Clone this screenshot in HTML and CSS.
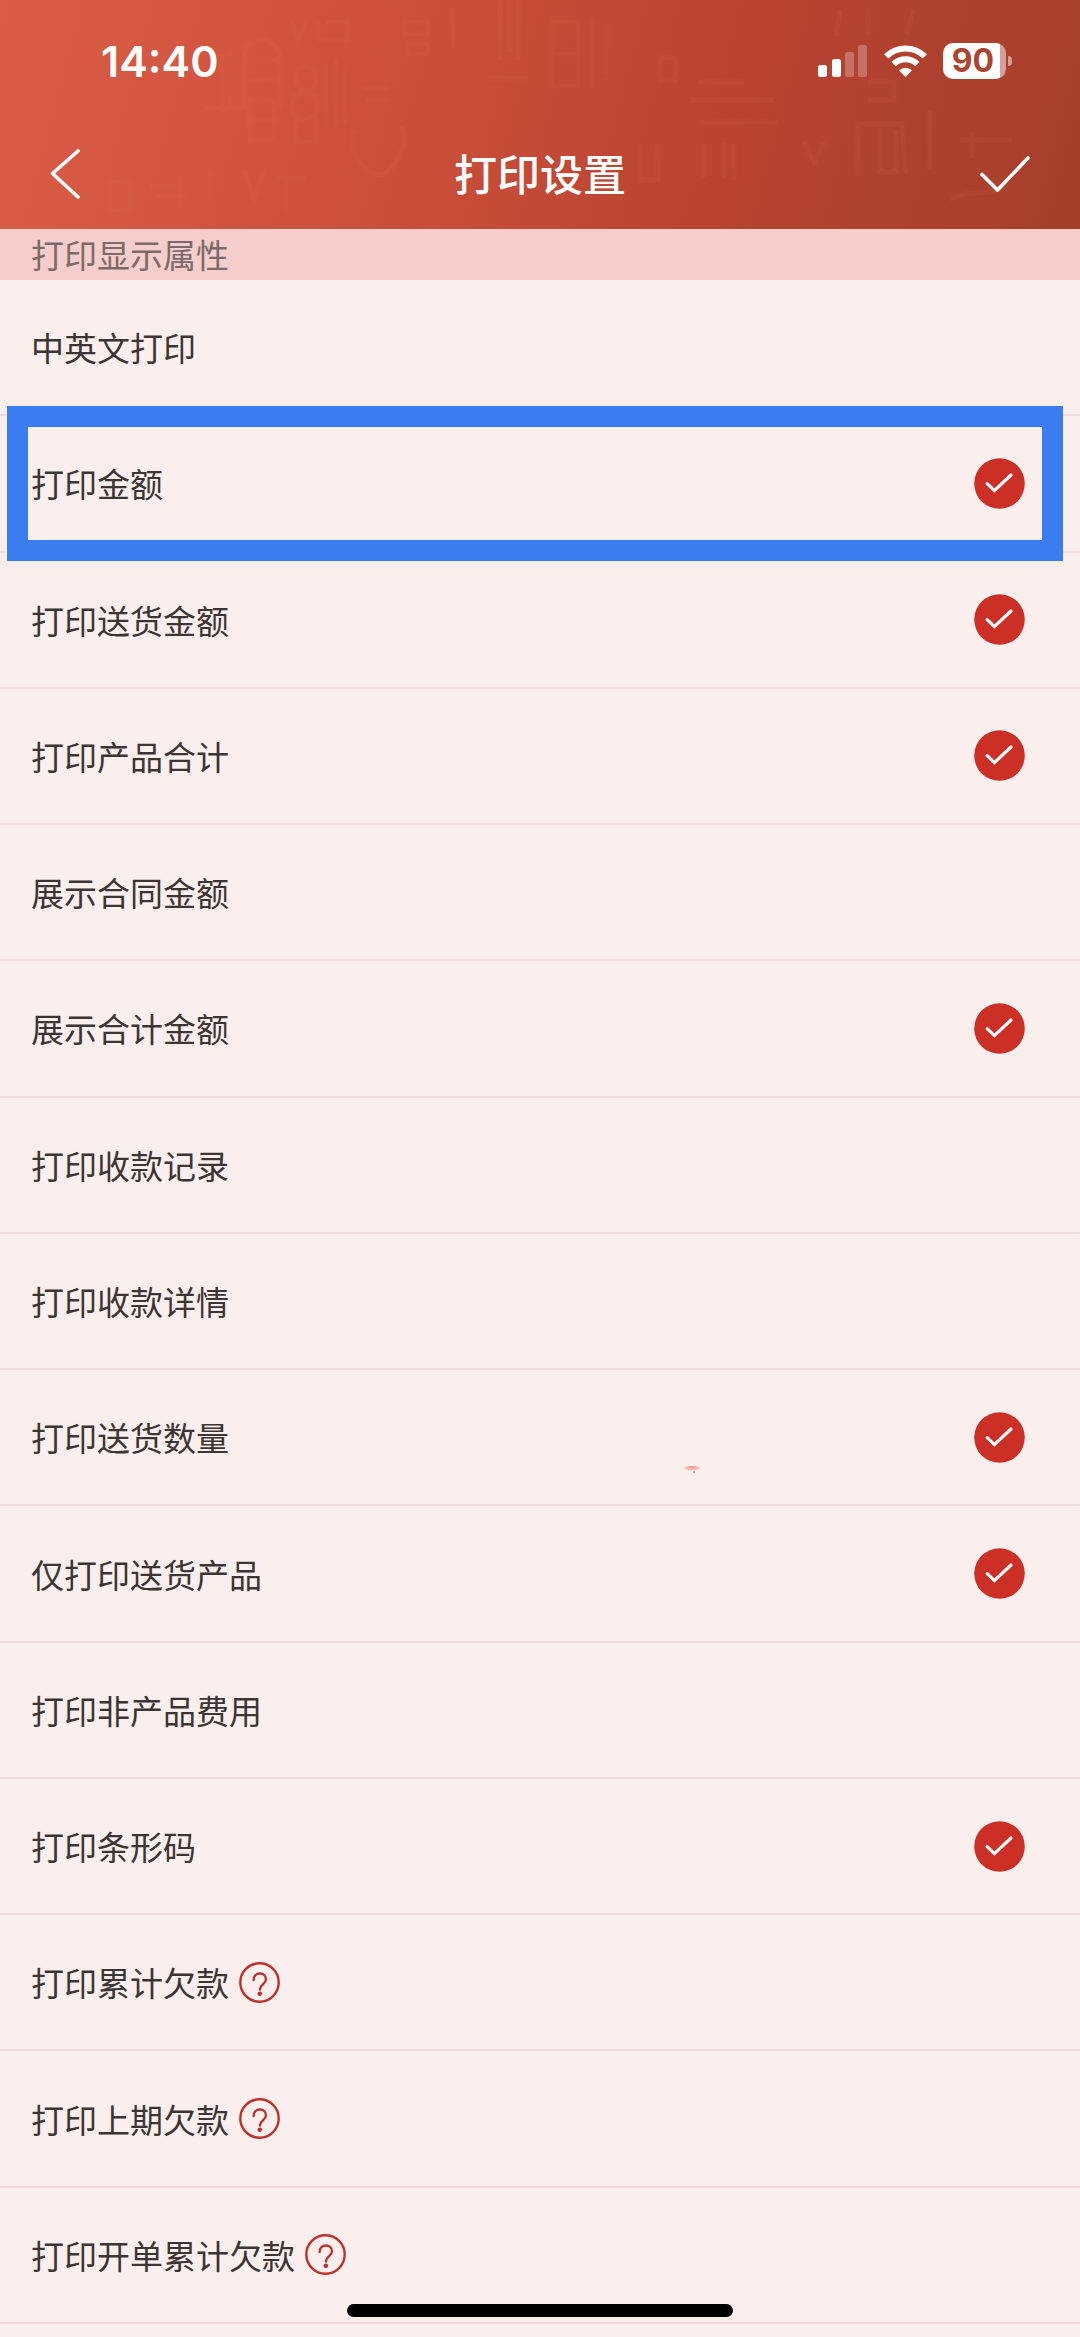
FILE: index.html
```html
<!DOCTYPE html>
<html lang="zh-CN">
<head>
  <meta charset="UTF-8" />
  <meta name="viewport" content="width=device-width, initial-scale=1" />
  <title>打印设置</title>
  <link rel="stylesheet" href="styles.css">
</head>
<body>
  <!-- 图标 -->
  <svg class="icon-defs" width="0" height="0" aria-hidden="true">
    <symbol id="icon-tick" viewBox="0 0 51 51">
      <circle cx="25.5" cy="25.5" r="25.3" fill="#cb2f26" />
      <path d="M13.2 25.6 20.4 32.6 37 17" fill="none" stroke="#fff" stroke-width="3.2" stroke-linecap="round" />
    </symbol>
    <symbol id="icon-help" viewBox="0 0 41 41">
      <circle cx="20.5" cy="20.5" r="19.2" fill="none" stroke="#bd322d" stroke-width="2.4" />
      <path d="M14.600 18c0-4 2.500-6.500 6.200-6.500s6.200 2.300 6.200 5.800c0 4.800-6 5.200-6 9.700v.5" fill="none" stroke="#bd322d" stroke-width="2.4" stroke-linecap="round" />
      <circle cx="20.800" cy="31.800" r="2.300" fill="#bd322d" />
    </symbol>
  </svg>

  <header class="header">
    <svg class="header-pattern" viewBox="0 0 1080 229" preserveAspectRatio="xMidYMid slice" fill="none" stroke="#e87a61" stroke-width="5" aria-hidden="true">
      <path d="M244 110V62c0-30 36-30 36 0v48M244 60h36M248 80h28M250 100h24v40h-24zM246 120h34M205 108h36M222 54v58M230 50v60M296 78c0-16 20-16 20 0s-20 16-20 0zM292 106c0-18 26-18 26 0s-26 18-26 0zM296 118v24h20v-24M326 64v64M336 60v68M344 70v56" />
      <path d="M292 20l6 22 8-20M318 22v18h30V22h-22M354 130c-8 30 20 50 30 44s26-30 18-48M362 88h28M366 100h22M404 22h24v12h-24zM408 44h20v10h-20zM452 8l2 40M500 0v60M510 0v52M518 0v60M488 78h40" />
      <path d="M110 182h20v28h-20zM150 186h30M156 196h30M180 176v34M210 174v26M244 170l10 28 10-28M276 178h30M286 176v36" />
      <path d="M552 22h26v64h-26zM552 54h26M592 18v70M606 24v50M660 58h16v22h-16zM698 82h46M690 100h84M700 122h78M640 144v36h18v-36M704 144v34M724 142v36M734 144v36" />
      <path d="M804 142l10 20 10-20M858 176v-52h44l4 50M880 128v44h16v-42M868 82h26v18h-26M930 110v60M960 140h52M972 132v26M950 200c14-12 40-2 56-14M840 10l-4 26M868 8v26M914 10l-8 24" />
    </svg>

    <div class="status-bar">
      <span class="time">14:40</span>
      <div class="status-icons">
        <svg width="50" height="34" viewBox="0 0 50 34" fill="#fff" aria-hidden="true">
          <rect x="0" y="21" width="9" height="12" rx="2.500" />
          <rect x="14" y="15" width="9" height="18" rx="2.500" />
          <rect x="27" y="8" width="9" height="25" rx="2.500" opacity=".25" />
          <rect x="40" y="1" width="9" height="32" rx="2.500" opacity=".25" />
        </svg>
        <svg width="43" height="34" viewBox="0 0 43 34" fill="none" stroke="#fff" stroke-width="6" aria-hidden="true">
          <path d="M2.200 12.400a27.500 27.500 0 0 1 38.600 0" />
          <path d="M9.600 20a17 17 0 0 1 23.800 0" />
          <path d="M21.500 33 15 26.300a9.300 9.300 0 0 1 13 0z" fill="#fff" stroke="none" />
        </svg>
        <div class="battery"><span>90</span></div>
      </div>
    </div>

    <nav class="nav-bar">
      <button type="button" class="nav-button" aria-label="返回">
        <svg width="30" height="50" viewBox="0 0 30 50" fill="none" stroke="#fff" stroke-width="3.600" stroke-linecap="round" stroke-linejoin="round"><path d="M28 2 2.500 24.500 28 48" /></svg>
      </button>
      <h1>打印设置</h1>
      <button type="button" class="nav-button" aria-label="保存">
        <svg width="50" height="36" viewBox="0 0 50 36" fill="none" stroke="#fff" stroke-width="3.600" stroke-linecap="round" stroke-linejoin="round"><path d="M2 18.500 17.500 34 48 2" /></svg>
      </button>
    </nav>
  </header>

  <main class="settings">
    <h2>打印显示属性</h2>
    <ul class="setting-list">
      <li class="row">
        <label for="bilingual">中英文打印</label>
        <span class="check"><input type="checkbox" id="bilingual" /><svg><use href="#icon-tick" /></svg></span>
      </li>
      <li class="row highlighted">
        <label for="amount">打印金额</label>
        <span class="check"><input type="checkbox" id="amount" checked /><svg><use href="#icon-tick" /></svg></span>
      </li>
      <li class="row">
        <label for="delivery-amount">打印送货金额</label>
        <span class="check"><input type="checkbox" id="delivery-amount" checked /><svg><use href="#icon-tick" /></svg></span>
      </li>
      <li class="row">
        <label for="product-total">打印产品合计</label>
        <span class="check"><input type="checkbox" id="product-total" checked /><svg><use href="#icon-tick" /></svg></span>
      </li>
      <li class="row">
        <label for="contract-amount">展示合同金额</label>
        <span class="check"><input type="checkbox" id="contract-amount" /><svg><use href="#icon-tick" /></svg></span>
      </li>
      <li class="row">
        <label for="total-amount">展示合计金额</label>
        <span class="check"><input type="checkbox" id="total-amount" checked /><svg><use href="#icon-tick" /></svg></span>
      </li>
      <li class="row">
        <label for="payment-record">打印收款记录</label>
        <span class="check"><input type="checkbox" id="payment-record" /><svg><use href="#icon-tick" /></svg></span>
      </li>
      <li class="row">
        <label for="payment-detail">打印收款详情</label>
        <span class="check"><input type="checkbox" id="payment-detail" /><svg><use href="#icon-tick" /></svg></span>
      </li>
      <li class="row">
        <label for="delivery-count">打印送货数量</label>
        <svg class="speck" width="16" height="10" viewBox="0 0 16 10" aria-hidden="true"><path d="M0 4 4 2h8l4 2-4 2H4z" fill="#f7b5a9" /><path d="M5 3h6M9 8h2" stroke="#f3a095" stroke-width="2" /></svg>
        <span class="check"><input type="checkbox" id="delivery-count" checked /><svg><use href="#icon-tick" /></svg></span>
      </li>
      <li class="row">
        <label for="delivery-only">仅打印送货产品</label>
        <span class="check"><input type="checkbox" id="delivery-only" checked /><svg><use href="#icon-tick" /></svg></span>
      </li>
      <li class="row">
        <label for="other-fee">打印非产品费用</label>
        <span class="check"><input type="checkbox" id="other-fee" /><svg><use href="#icon-tick" /></svg></span>
      </li>
      <li class="row">
        <label for="barcode">打印条形码</label>
        <span class="check"><input type="checkbox" id="barcode" checked /><svg><use href="#icon-tick" /></svg></span>
      </li>
      <li class="row">
        <label for="total-debt">打印累计欠款</label>
        <button type="button" class="help" aria-label="累计欠款说明"><svg><use href="#icon-help" /></svg></button>
        <span class="check"><input type="checkbox" id="total-debt" /><svg><use href="#icon-tick" /></svg></span>
      </li>
      <li class="row">
        <label for="last-debt">打印上期欠款</label>
        <button type="button" class="help" aria-label="上期欠款说明"><svg><use href="#icon-help" /></svg></button>
        <span class="check"><input type="checkbox" id="last-debt" /><svg><use href="#icon-tick" /></svg></span>
      </li>
      <li class="row">
        <label for="order-debt">打印开单累计欠款</label>
        <button type="button" class="help" aria-label="开单累计欠款说明"><svg><use href="#icon-help" /></svg></button>
        <span class="check"><input type="checkbox" id="order-debt" /><svg><use href="#icon-tick" /></svg></span>
      </li>
    </ul>
  </main>

  <div class="home-indicator"></div>
</body>
</html>
```
FILE: styles.css
```css
* {
  box-sizing: border-box;
}
body {
  margin: 0;
  min-height: 100vh;
  display: flex;
  flex-direction: column;
  background-color: #fbefed;
  color: #3b3534;
  font-family: "Noto Sans CJK SC", sans-serif;
  font-size: 33px;
}
button {
  padding: 0;
  border: none;
  background: none;
  cursor: pointer;
}
svg {
  display: block;
}
.icon-defs {
  position: absolute;
}

/* 顶部 */
.header {
  position: relative;
  background: linear-gradient(105deg, #da5d47 0%, #c94e39 42%, #b94431 66%, #a63e2c 100%);
  color: #fff;
}
.header-pattern {
  position: absolute;
  inset: 0;
  width: 100%;
  height: 100%;
  opacity: 0.09;
}
.status-bar,
.nav-bar {
  position: relative;
  display: flex;
  align-items: center;
  justify-content: space-between;
}
.status-bar {
  height: 122px;
  padding: 0 74px 0 101px;
}
.time {
  font-family: Inter, sans-serif;
  font-size: 43px;
  font-weight: 600;
}
.status-icons {
  display: flex;
  align-items: center;
  gap: 16px;
}
.battery {
  position: relative;
  width: 63px;
  height: 36px;
  padding-right: 3px;
  border-radius: 10px;
  background: linear-gradient(to right, #fff 57px, rgba(255, 255, 255, 0.5) 57px);
  color: #ad4431;
  font-family: Inter, sans-serif;
  font-size: 32px;
  font-weight: 700;
  line-height: 36px;
  text-align: center;
}
.battery::after {
  content: "";
  position: absolute;
  top: 13px;
  right: -6px;
  width: 4px;
  height: 10px;
  border-radius: 0 4px 4px 0;
  background-color: rgba(255, 255, 255, 0.5);
}
.nav-bar {
  height: 107px;
  padding: 0 50px 4px;
}
.nav-button {
  display: flex;
  width: 50px;
}
.nav-bar h1 {
  margin: 0;
  padding-bottom: 4px;
  font-size: 43px;
  font-weight: 500;
  line-height: 60px;
}

/* 设置列表 */
.settings {
  flex: 1;
  display: flex;
  flex-direction: column;
  padding-bottom: 13px;
}
.settings h2 {
  margin: 0;
  padding: 0 31px;
  background-color: #f5cecb;
  color: #7c6a68;
  font-size: 33px;
  font-weight: 400;
  line-height: 51px;
}
.setting-list {
  flex: 1;
  display: flex;
  flex-direction: column;
  margin: 0;
  padding: 0;
  list-style: none;
}
.row {
  position: relative;
  flex: 1;
  display: flex;
  align-items: center;
  gap: 10px;
  min-height: 120px;
  padding: 0 55px 0 31px;
  border-bottom: 2px solid #f1dbdb;
}
.highlighted::after {
  content: "";
  position: absolute;
  z-index: 1;
  inset: -10px 17px -10px 7px;
  border: 21px solid #3b7cf0;
  pointer-events: none;
}
.check {
  display: grid;
  margin-left: auto;
}
.check input,
.check svg {
  grid-area: 1 / 1;
  width: 51px;
  height: 51px;
  margin: 0;
}
.check input {
  appearance: none;
  border-radius: 50%;
  cursor: pointer;
}
.check svg {
  visibility: hidden;
  pointer-events: none;
}
.check input:checked + svg {
  visibility: visible;
}
.help svg {
  width: 41px;
  height: 41px;
}
.speck {
  position: absolute;
  left: 64%;
  bottom: 30px;
  margin-left: -7px;
}
.home-indicator {
  position: fixed;
  z-index: 2;
  bottom: 20px;
  left: 50%;
  width: 386px;
  height: 13px;
  border-radius: 7px;
  background-color: #000;
  transform: translateX(-50%);
}
```
